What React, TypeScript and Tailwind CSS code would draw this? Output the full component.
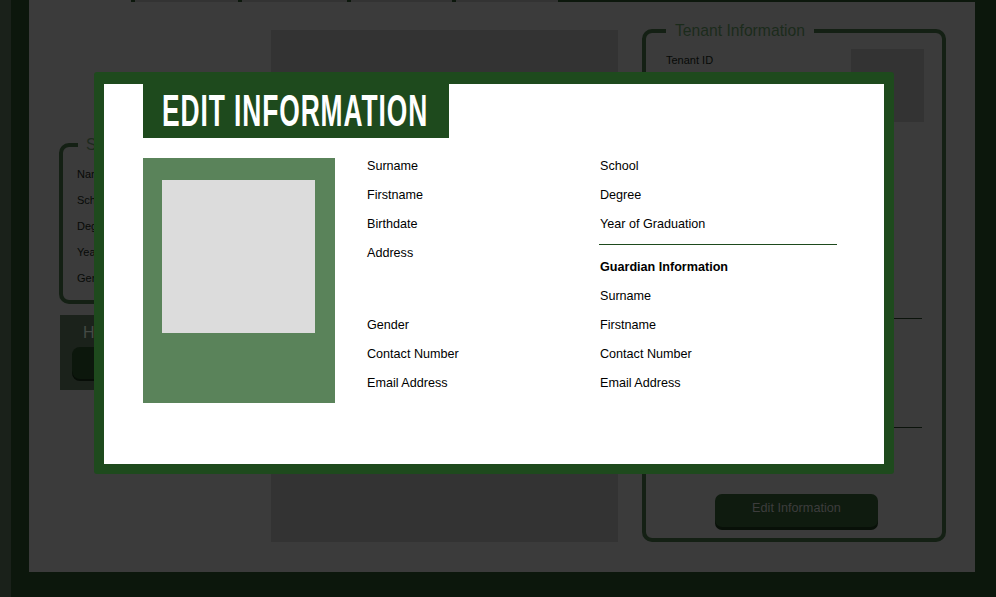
import React from "react";

const F = { fontFamily: '"Liberation Sans", Arial, sans-serif' };

function Row({ children, bold }: { children: React.ReactNode; bold?: boolean }) {
  return (
    <div className={`h-[29px] leading-[29px] text-[12.6px] text-black ${bold ? "font-bold" : ""}`}>{children}</div>
  );
}

export default function App() {
  return (
    <div className="relative flex h-[597px] w-[996px] overflow-hidden bg-[#0c170c]" style={F}>
      <div className="w-[11px] shrink-0 bg-[#1a211a]" />
      <div className="flex flex-1 flex-col pb-[25px] pl-[18px] pr-[21px]">
        <div className="flex flex-1 flex-col bg-[#3b3b3b]">
          {/* top tab strip */}
          <div className="flex h-[2px]">
            <div className="w-[102px]" />
            <div className="w-[107px] border-l-[4px] border-[#0c170c] bg-[#333333]" />
            <div className="w-[109px] border-l-[4px] border-[#0c170c] bg-[#333333]" />
            <div className="w-[105px] border-l-[4px] border-[#0c170c] bg-[#333333]" />
            <div className="w-[106px] border-l-[4px] border-[#0c170c] bg-[#333333]" />
            <div className="flex-1 bg-[#0c170c]" />
          </div>
          <div className="flex items-start pl-[30px] pt-[20px]">
            {/* left column */}
            <div className="mt-[114px] w-[191px] shrink-0">
              <fieldset className="rounded-[10px] border-[4px] border-[#142014] pb-[9px] pl-[14px]">
                <legend className="ml-[1px] px-[8px] text-[15.7px] leading-[18px] text-[#1e2a1e]">Student Information</legend>
                <div className="pt-[7px] text-[11px] leading-[26px] text-[#070a07]">
                  <div>Name</div>
                  <div>School</div>
                  <div>Degree</div>
                  <div>Year</div>
                  <div>Gender</div>
                </div>
              </fieldset>
              <div className="ml-[1px] mt-[11px] h-[75px] bg-[#1b221b] pl-[12px] pt-[9px]">
                <div className="pl-[11px] text-[16px] leading-[18px] text-[#454a45]">Hello, Tenant</div>
                <button className="mt-[5px] h-[32px] w-[150px] rounded-[8px] bg-[#0c170c] shadow-[0_2px_0_#070d07]" />
              </div>
            </div>
            {/* middle */}
            <div className="ml-[21px] mt-[8px] h-[512px] w-[347px] shrink-0 bg-[#333333]" />
            {/* tenant */}
            <fieldset className="ml-[24px] h-[520px] w-[304px] shrink-0 rounded-[10px] border-[4px] border-[#142014] pl-[20px] pr-[18px]">
              <legend className="px-[9px] text-[15.7px] leading-[18px] text-[#1b2b1b]">Tenant Information</legend>
              <div className="flex items-start justify-between pt-[9px]">
                <div className="mt-[4px] text-[11px] leading-[14px] text-[#070a07]">Tenant ID</div>
                <div className="h-[73px] w-[73px] bg-[#333333]" />
              </div>
              <div className="mr-[2px] mt-[196px] h-[1px] bg-[#0b130b]" />
              <div className="mr-[2px] mt-[108px] h-[1px] bg-[#0b130b]" />
              <button className="ml-[49px] mt-[66px] h-[33px] w-[163px] rounded-[7px] bg-[#0f1b0f] pb-[4px] text-[12.7px] text-[#3d3d3d] shadow-[0_3px_0_#081008]">
                Edit Information
              </button>
            </fieldset>
          </div>
        </div>
      </div>

      {/* modal */}
      <div className="absolute left-[94px] top-[72px] h-[402px] w-[800px] rounded-[3px] bg-[#1e4a1d] pb-[10px] pl-[10px] pr-[10px] pt-[12px]">
        <div className="h-full w-full bg-white pl-[39px]">
          <div className="h-[54px] w-[306px] overflow-hidden bg-[#1e4a1d] pl-[19px] pt-[3px]">
            <span className="inline-block origin-left scale-x-[0.6] whitespace-nowrap text-[44px] font-bold leading-[48px] tracking-[1.5px] text-white">
              EDIT INFORMATION
            </span>
          </div>
          <div className="mt-[14px] flex items-start">
            <div className="mt-[6px] h-[245px] w-[192px] bg-[#5a835a] pl-[19px] pt-[22px]">
              <div className="h-[153px] w-[153px] bg-[#dcdcdc]" />
            </div>
            <div className="ml-[32px] w-[233px]">
              <Row>Surname</Row>
              <Row>Firstname</Row>
              <Row>Birthdate</Row>
              <div className="h-[72px]">
                <Row>Address</Row>
              </div>
              <Row>Gender</Row>
              <Row>Contact Number</Row>
              <Row>Email Address</Row>
            </div>
            <div className="w-[237px]">
              <Row>School</Row>
              <Row>Degree</Row>
              <Row>Year of Graduation</Row>
              <div className="-ml-[1px] mt-[5px] h-[1px] bg-[#1e4a1d]" />
              <div className="mt-[8px]">
                <Row bold>Guardian Information</Row>
                <Row>Surname</Row>
                <Row>Firstname</Row>
                <Row>Contact Number</Row>
                <Row>Email Address</Row>
              </div>
            </div>
          </div>
        </div>
      </div>
    </div>
  );
}
